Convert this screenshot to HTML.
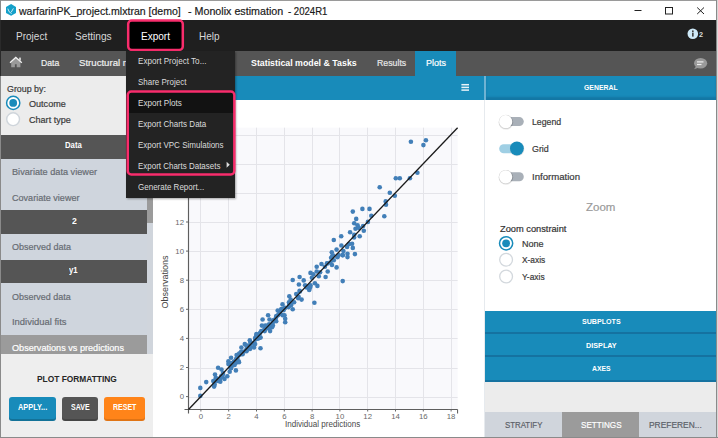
<!DOCTYPE html>
<html><head><meta charset="utf-8"><style>
*{margin:0;padding:0;box-sizing:border-box}
html,body{width:718px;height:438px;overflow:hidden;background:#fff;font-family:'Liberation Sans',sans-serif}
.a{position:absolute}
.t{position:absolute;white-space:pre;transform-origin:0 0;-webkit-text-stroke:0.2px currentColor}
.t.b{-webkit-text-stroke:0}
svg{position:absolute;left:0;top:0}
</style></head>
<body>
<div class="a" style="left:0px;top:0px;width:718px;height:1px;background:#9a9a9a;"></div>
<div class="a" style="left:0px;top:20px;width:716px;height:31px;background:#1f1f1f;"></div>
<div class="a" style="left:0px;top:51px;width:716px;height:25px;background:#555555;"></div>
<div class="a" style="left:415px;top:51px;width:41px;height:25px;background:#188bba;"></div>
<div class="a" style="left:0px;top:76px;width:153px;height:59px;background:#ececec;"></div>
<div class="a" style="left:0px;top:135px;width:147px;height:24px;background:#555555;"></div>
<div class="a" style="left:0px;top:159px;width:153px;height:51px;background:#cfd5dd;"></div>
<div class="a" style="left:0px;top:210px;width:147px;height:24px;background:#555555;"></div>
<div class="a" style="left:0px;top:234px;width:153px;height:26px;background:#cfd5dd;"></div>
<div class="a" style="left:0px;top:260px;width:147px;height:23px;background:#555555;"></div>
<div class="a" style="left:0px;top:283px;width:153px;height:72px;background:#cfd5dd;"></div>
<div class="a" style="left:0px;top:335px;width:147px;height:19px;background:#9b9b9b;"></div>
<div class="a" style="left:147px;top:76px;width:6px;height:278px;background:#d0d5dc;"></div>
<div class="a" style="left:147px;top:76px;width:6px;height:147px;background:#9b9b9b;"></div>
<div class="a" style="left:0px;top:354px;width:153px;height:83px;background:#eeeeee;"></div>
<div class="a" style="left:8.8px;top:397.4px;width:47.2px;height:23.4px;background:#188bba;border-radius:3px;box-shadow:inset 0 -2px 0 rgba(0,0,0,0.18);"></div>
<div class="a" style="left:61.8px;top:397.4px;width:36.4px;height:23.4px;background:#555555;border-radius:3px;box-shadow:inset 0 -2px 0 rgba(0,0,0,0.18);"></div>
<div class="a" style="left:104px;top:397.4px;width:41.2px;height:23.4px;background:#ff8419;border-radius:3px;box-shadow:inset 0 -2px 0 rgba(0,0,0,0.12);"></div>
<div class="a" style="left:153px;top:76px;width:332px;height:24px;background:#188bba;"></div>
<div class="a" style="left:486px;top:76px;width:230px;height:24px;background:#188bba;box-shadow:inset 0 -3px 2px rgba(0,50,90,0.22);"></div>
<div class="a" style="left:484px;top:76px;width:2px;height:24px;background:#6fb3d3;"></div>
<div class="a" style="left:484px;top:100px;width:1px;height:337px;background:#e6eaee;"></div>
<div class="a" style="left:485px;top:311px;width:231px;height:71px;background:#188bba;"></div>
<div class="a" style="left:485px;top:332px;width:231px;height:2px;background:#1572a0;"></div>
<div class="a" style="left:485px;top:355px;width:231px;height:2px;background:#1572a0;"></div>
<div class="a" style="left:485px;top:380px;width:231px;height:2px;background:#1572a0;"></div>
<div class="a" style="left:485px;top:382px;width:231px;height:30px;background:#ececec;"></div>
<div class="a" style="left:485px;top:412px;width:77px;height:25px;background:#d0d5dc;"></div>
<div class="a" style="left:562px;top:412px;width:77px;height:25px;background:#9b9b9b;"></div>
<div class="a" style="left:639px;top:412px;width:77px;height:25px;background:#d0d5dc;"></div>
<svg width="718" height="438" font-family="'Liberation Sans', sans-serif"><rect x="188.5" y="127.7" width="269.1" height="281.8" fill="#f9f9fc"/><line x1="200.50" y1="127.7" x2="200.50" y2="409.5" stroke="#e4e4e9" stroke-width="1"/><line x1="188.5" y1="397.50" x2="457.6" y2="397.50" stroke="#e4e4e9" stroke-width="1"/><line x1="228.50" y1="127.7" x2="228.50" y2="409.5" stroke="#e4e4e9" stroke-width="1"/><line x1="188.5" y1="368.50" x2="457.6" y2="368.50" stroke="#e4e4e9" stroke-width="1"/><line x1="256.50" y1="127.7" x2="256.50" y2="409.5" stroke="#e4e4e9" stroke-width="1"/><line x1="188.5" y1="338.50" x2="457.6" y2="338.50" stroke="#e4e4e9" stroke-width="1"/><line x1="284.50" y1="127.7" x2="284.50" y2="409.5" stroke="#e4e4e9" stroke-width="1"/><line x1="188.5" y1="309.50" x2="457.6" y2="309.50" stroke="#e4e4e9" stroke-width="1"/><line x1="312.50" y1="127.7" x2="312.50" y2="409.5" stroke="#e4e4e9" stroke-width="1"/><line x1="188.5" y1="280.50" x2="457.6" y2="280.50" stroke="#e4e4e9" stroke-width="1"/><line x1="339.50" y1="127.7" x2="339.50" y2="409.5" stroke="#e4e4e9" stroke-width="1"/><line x1="188.5" y1="251.50" x2="457.6" y2="251.50" stroke="#e4e4e9" stroke-width="1"/><line x1="367.50" y1="127.7" x2="367.50" y2="409.5" stroke="#e4e4e9" stroke-width="1"/><line x1="188.5" y1="222.50" x2="457.6" y2="222.50" stroke="#e4e4e9" stroke-width="1"/><line x1="395.50" y1="127.7" x2="395.50" y2="409.5" stroke="#e4e4e9" stroke-width="1"/><line x1="188.5" y1="193.50" x2="457.6" y2="193.50" stroke="#e4e4e9" stroke-width="1"/><line x1="423.50" y1="127.7" x2="423.50" y2="409.5" stroke="#e4e4e9" stroke-width="1"/><line x1="188.5" y1="164.50" x2="457.6" y2="164.50" stroke="#e4e4e9" stroke-width="1"/><line x1="451.50" y1="127.7" x2="451.50" y2="409.5" stroke="#e4e4e9" stroke-width="1"/><line x1="188.5" y1="135.50" x2="457.6" y2="135.50" stroke="#e4e4e9" stroke-width="1"/><line x1="188.5" y1="127.7" x2="188.5" y2="413.5" stroke="#5e5e5e" stroke-width="1.15"/><line x1="184.5" y1="409.5" x2="457.6" y2="409.5" stroke="#5e5e5e" stroke-width="1.15"/><line x1="457.6" y1="409.5" x2="457.6" y2="413.5" stroke="#555" stroke-width="1"/><line x1="200.90" y1="409.5" x2="200.90" y2="411.5" stroke="#666" stroke-width="1"/><text x="200.90" y="418.6" text-anchor="middle" font-size="7.8" fill="#6a6a6a">0</text><line x1="186.0" y1="396.60" x2="188.5" y2="396.60" stroke="#666" stroke-width="1"/><text x="184" y="399.30" text-anchor="end" font-size="7.8" fill="#6a6a6a">0</text><line x1="228.70" y1="409.5" x2="228.70" y2="411.5" stroke="#666" stroke-width="1"/><text x="228.70" y="418.6" text-anchor="middle" font-size="7.8" fill="#6a6a6a">2</text><line x1="186.0" y1="367.50" x2="188.5" y2="367.50" stroke="#666" stroke-width="1"/><text x="184" y="370.20" text-anchor="end" font-size="7.8" fill="#6a6a6a">2</text><line x1="256.50" y1="409.5" x2="256.50" y2="411.5" stroke="#666" stroke-width="1"/><text x="256.50" y="418.6" text-anchor="middle" font-size="7.8" fill="#6a6a6a">4</text><line x1="186.0" y1="338.40" x2="188.5" y2="338.40" stroke="#666" stroke-width="1"/><text x="184" y="341.10" text-anchor="end" font-size="7.8" fill="#6a6a6a">4</text><line x1="284.30" y1="409.5" x2="284.30" y2="411.5" stroke="#666" stroke-width="1"/><text x="284.30" y="418.6" text-anchor="middle" font-size="7.8" fill="#6a6a6a">6</text><line x1="186.0" y1="309.30" x2="188.5" y2="309.30" stroke="#666" stroke-width="1"/><text x="184" y="312.00" text-anchor="end" font-size="7.8" fill="#6a6a6a">6</text><line x1="312.10" y1="409.5" x2="312.10" y2="411.5" stroke="#666" stroke-width="1"/><text x="312.10" y="418.6" text-anchor="middle" font-size="7.8" fill="#6a6a6a">8</text><line x1="186.0" y1="280.20" x2="188.5" y2="280.20" stroke="#666" stroke-width="1"/><text x="184" y="282.90" text-anchor="end" font-size="7.8" fill="#6a6a6a">8</text><line x1="339.90" y1="409.5" x2="339.90" y2="411.5" stroke="#666" stroke-width="1"/><text x="339.90" y="418.6" text-anchor="middle" font-size="7.8" fill="#6a6a6a">10</text><line x1="186.0" y1="251.10" x2="188.5" y2="251.10" stroke="#666" stroke-width="1"/><text x="184" y="253.80" text-anchor="end" font-size="7.8" fill="#6a6a6a">10</text><line x1="367.70" y1="409.5" x2="367.70" y2="411.5" stroke="#666" stroke-width="1"/><text x="367.70" y="418.6" text-anchor="middle" font-size="7.8" fill="#6a6a6a">12</text><line x1="186.0" y1="222.00" x2="188.5" y2="222.00" stroke="#666" stroke-width="1"/><text x="184" y="224.70" text-anchor="end" font-size="7.8" fill="#6a6a6a">12</text><line x1="395.50" y1="409.5" x2="395.50" y2="411.5" stroke="#666" stroke-width="1"/><text x="395.50" y="418.6" text-anchor="middle" font-size="7.8" fill="#6a6a6a">14</text><line x1="186.0" y1="192.90" x2="188.5" y2="192.90" stroke="#666" stroke-width="1"/><text x="184" y="195.60" text-anchor="end" font-size="7.8" fill="#6a6a6a">14</text><line x1="423.30" y1="409.5" x2="423.30" y2="411.5" stroke="#666" stroke-width="1"/><text x="423.30" y="418.6" text-anchor="middle" font-size="7.8" fill="#6a6a6a">16</text><line x1="186.0" y1="163.80" x2="188.5" y2="163.80" stroke="#666" stroke-width="1"/><text x="184" y="166.50" text-anchor="end" font-size="7.8" fill="#6a6a6a">16</text><line x1="451.10" y1="409.5" x2="451.10" y2="411.5" stroke="#666" stroke-width="1"/><text x="451.10" y="418.6" text-anchor="middle" font-size="7.8" fill="#6a6a6a">18</text><line x1="186.0" y1="134.70" x2="188.5" y2="134.70" stroke="#666" stroke-width="1"/><text x="184" y="137.40" text-anchor="end" font-size="7.8" fill="#6a6a6a">18</text><text transform="translate(167.6,282.1) rotate(-90)" text-anchor="middle" font-size="8.5" fill="#444" textLength="53" lengthAdjust="spacingAndGlyphs">Observations</text><g fill="#427fb8"><circle cx="220.3" cy="381.8" r="2.3"/><circle cx="220.5" cy="378.2" r="2.3"/><circle cx="221.2" cy="376.8" r="2.3"/><circle cx="221.2" cy="376.2" r="2.3"/><circle cx="223.0" cy="373.1" r="2.3"/><circle cx="218.0" cy="379.8" r="2.3"/><circle cx="214.8" cy="380.6" r="2.3"/><circle cx="214.1" cy="386.6" r="2.3"/><circle cx="228.4" cy="364.1" r="2.3"/><circle cx="222.8" cy="374.5" r="2.3"/><circle cx="215.8" cy="377.8" r="2.3"/><circle cx="214.3" cy="382.2" r="2.3"/><circle cx="234.0" cy="361.9" r="2.3"/><circle cx="241.6" cy="353.4" r="2.3"/><circle cx="240.9" cy="353.1" r="2.3"/><circle cx="246.5" cy="351.2" r="2.3"/><circle cx="242.6" cy="354.3" r="2.3"/><circle cx="236.4" cy="361.6" r="2.3"/><circle cx="256.4" cy="334.0" r="2.3"/><circle cx="248.4" cy="347.0" r="2.3"/><circle cx="237.5" cy="358.1" r="2.3"/><circle cx="230.7" cy="363.5" r="2.3"/><circle cx="250.0" cy="348.9" r="2.3"/><circle cx="239.4" cy="353.6" r="2.3"/><circle cx="255.3" cy="339.6" r="2.3"/><circle cx="234.5" cy="361.5" r="2.3"/><circle cx="254.0" cy="347.4" r="2.3"/><circle cx="239.7" cy="354.7" r="2.3"/><circle cx="230.7" cy="368.2" r="2.3"/><circle cx="236.2" cy="362.6" r="2.3"/><circle cx="231.1" cy="367.9" r="2.3"/><circle cx="249.8" cy="340.2" r="2.3"/><circle cx="232.0" cy="364.0" r="2.3"/><circle cx="230.4" cy="364.7" r="2.3"/><circle cx="250.9" cy="343.0" r="2.3"/><circle cx="241.1" cy="351.8" r="2.3"/><circle cx="234.0" cy="362.1" r="2.3"/><circle cx="246.6" cy="350.0" r="2.3"/><circle cx="231.9" cy="365.5" r="2.3"/><circle cx="236.2" cy="358.9" r="2.3"/><circle cx="255.7" cy="338.6" r="2.3"/><circle cx="253.3" cy="343.6" r="2.3"/><circle cx="234.6" cy="365.0" r="2.3"/><circle cx="246.5" cy="346.0" r="2.3"/><circle cx="231.5" cy="363.0" r="2.3"/><circle cx="235.9" cy="360.1" r="2.3"/><circle cx="250.2" cy="345.9" r="2.3"/><circle cx="230.7" cy="363.6" r="2.3"/><circle cx="231.2" cy="366.4" r="2.3"/><circle cx="245.4" cy="350.9" r="2.3"/><circle cx="239.0" cy="362.3" r="2.3"/><circle cx="242.1" cy="351.7" r="2.3"/><circle cx="264.5" cy="328.8" r="2.3"/><circle cx="258.6" cy="337.5" r="2.3"/><circle cx="269.1" cy="324.3" r="2.3"/><circle cx="259.1" cy="337.6" r="2.3"/><circle cx="266.8" cy="325.8" r="2.3"/><circle cx="269.7" cy="325.3" r="2.3"/><circle cx="268.8" cy="328.0" r="2.3"/><circle cx="257.9" cy="338.7" r="2.3"/><circle cx="257.0" cy="335.7" r="2.3"/><circle cx="266.3" cy="328.6" r="2.3"/><circle cx="260.1" cy="332.9" r="2.3"/><circle cx="260.6" cy="337.6" r="2.3"/><circle cx="274.1" cy="320.2" r="2.3"/><circle cx="275.2" cy="320.1" r="2.3"/><circle cx="282.1" cy="309.0" r="2.3"/><circle cx="276.2" cy="321.3" r="2.3"/><circle cx="289.5" cy="303.7" r="2.3"/><circle cx="276.0" cy="317.4" r="2.3"/><circle cx="279.7" cy="312.3" r="2.3"/><circle cx="278.1" cy="315.1" r="2.3"/><circle cx="282.3" cy="309.3" r="2.3"/><circle cx="289.0" cy="302.2" r="2.3"/><circle cx="290.8" cy="305.2" r="2.3"/><circle cx="282.6" cy="315.2" r="2.3"/><circle cx="273.3" cy="320.2" r="2.3"/><circle cx="289.4" cy="303.9" r="2.3"/><circle cx="285.0" cy="307.9" r="2.3"/><circle cx="283.7" cy="310.1" r="2.3"/><circle cx="280.5" cy="313.7" r="2.3"/><circle cx="291.2" cy="304.8" r="2.3"/><circle cx="272.0" cy="327.2" r="2.3"/><circle cx="289.2" cy="305.7" r="2.3"/><circle cx="306.6" cy="287.4" r="2.3"/><circle cx="310.3" cy="287.0" r="2.3"/><circle cx="298.6" cy="296.8" r="2.3"/><circle cx="309.4" cy="288.8" r="2.3"/><circle cx="299.9" cy="291.5" r="2.3"/><circle cx="332.0" cy="265.0" r="2.3"/><circle cx="333.8" cy="260.3" r="2.3"/><circle cx="333.3" cy="255.5" r="2.3"/><circle cx="314.9" cy="283.2" r="2.3"/><circle cx="342.7" cy="255.3" r="2.3"/><circle cx="337.4" cy="257.3" r="2.3"/><circle cx="332.3" cy="256.0" r="2.3"/><circle cx="327.4" cy="263.5" r="2.3"/><circle cx="354.1" cy="237.5" r="2.3"/><circle cx="347.1" cy="246.9" r="2.3"/><circle cx="349.1" cy="244.0" r="2.3"/><circle cx="200.3" cy="395.9" r="2.3"/><circle cx="200.3" cy="387.9" r="2.3"/><circle cx="206.2" cy="382.1" r="2.3"/><circle cx="213.3" cy="381.1" r="2.3"/><circle cx="214.7" cy="384.5" r="2.3"/><circle cx="218.0" cy="381.0" r="2.3"/><circle cx="215.0" cy="374.5" r="2.3"/><circle cx="218.1" cy="367.7" r="2.3"/><circle cx="221.5" cy="369.5" r="2.3"/><circle cx="222.2" cy="376.3" r="2.3"/><circle cx="224.5" cy="379.0" r="2.3"/><circle cx="227.3" cy="376.3" r="2.3"/><circle cx="229.7" cy="371.8" r="2.3"/><circle cx="231.1" cy="367.4" r="2.3"/><circle cx="235.9" cy="370.4" r="2.3"/><circle cx="228.4" cy="361.2" r="2.3"/><circle cx="231.1" cy="357.8" r="2.3"/><circle cx="235.2" cy="363.3" r="2.3"/><circle cx="238.6" cy="361.2" r="2.3"/><circle cx="239.3" cy="353.7" r="2.3"/><circle cx="241.4" cy="347.5" r="2.3"/><circle cx="242.7" cy="352.3" r="2.3"/><circle cx="244.8" cy="344.1" r="2.3"/><circle cx="246.2" cy="350.3" r="2.3"/><circle cx="247.5" cy="345.5" r="2.3"/><circle cx="236.6" cy="355.1" r="2.3"/><circle cx="250.3" cy="342.1" r="2.3"/><circle cx="255.1" cy="344.1" r="2.3"/><circle cx="260.5" cy="348.2" r="2.3"/><circle cx="256.4" cy="335.2" r="2.3"/><circle cx="255.1" cy="338.0" r="2.3"/><circle cx="259.9" cy="337.3" r="2.3"/><circle cx="261.2" cy="331.1" r="2.3"/><circle cx="264.7" cy="331.1" r="2.3"/><circle cx="270.1" cy="331.1" r="2.3"/><circle cx="261.9" cy="325.6" r="2.3"/><circle cx="265.3" cy="325.6" r="2.3"/><circle cx="262.6" cy="319.5" r="2.3"/><circle cx="268.1" cy="315.3" r="2.3"/><circle cx="269.5" cy="319.5" r="2.3"/><circle cx="272.9" cy="325.6" r="2.3"/><circle cx="272.9" cy="322.2" r="2.3"/><circle cx="276.3" cy="316.0" r="2.3"/><circle cx="277.7" cy="310.5" r="2.3"/><circle cx="281.1" cy="309.2" r="2.3"/><circle cx="282.5" cy="304.4" r="2.3"/><circle cx="284.5" cy="315.3" r="2.3"/><circle cx="285.2" cy="318.8" r="2.3"/><circle cx="285.2" cy="322.2" r="2.3"/><circle cx="288.6" cy="307.1" r="2.3"/><circle cx="292.7" cy="309.2" r="2.3"/><circle cx="290.7" cy="299.6" r="2.3"/><circle cx="289.3" cy="296.2" r="2.3"/><circle cx="294.1" cy="302.3" r="2.3"/><circle cx="296.2" cy="294.1" r="2.3"/><circle cx="298.2" cy="298.2" r="2.3"/><circle cx="292.7" cy="280.0" r="2.3"/><circle cx="299.6" cy="277.0" r="2.3"/><circle cx="298.9" cy="284.5" r="2.3"/><circle cx="303.7" cy="280.4" r="2.3"/><circle cx="305.1" cy="285.2" r="2.3"/><circle cx="307.8" cy="286.6" r="2.3"/><circle cx="310.5" cy="285.2" r="2.3"/><circle cx="309.2" cy="290.0" r="2.3"/><circle cx="299.6" cy="290.7" r="2.3"/><circle cx="301.6" cy="299.6" r="2.3"/><circle cx="317.4" cy="285.9" r="2.3"/><circle cx="310.5" cy="272.9" r="2.3"/><circle cx="313.3" cy="274.2" r="2.3"/><circle cx="311.9" cy="277.7" r="2.3"/><circle cx="316.7" cy="271.5" r="2.3"/><circle cx="318.8" cy="276.3" r="2.3"/><circle cx="320.1" cy="272.2" r="2.3"/><circle cx="316.7" cy="266.7" r="2.3"/><circle cx="321.5" cy="264.0" r="2.3"/><circle cx="324.9" cy="266.7" r="2.3"/><circle cx="327.7" cy="271.5" r="2.3"/><circle cx="325.6" cy="277.0" r="2.3"/><circle cx="327.0" cy="263.3" r="2.3"/><circle cx="330.4" cy="262.6" r="2.3"/><circle cx="331.1" cy="257.8" r="2.3"/><circle cx="331.8" cy="252.3" r="2.3"/><circle cx="336.6" cy="249.6" r="2.3"/><circle cx="336.6" cy="267.4" r="2.3"/><circle cx="338.6" cy="255.1" r="2.3"/><circle cx="342.7" cy="255.1" r="2.3"/><circle cx="343.4" cy="251.0" r="2.3"/><circle cx="341.4" cy="245.5" r="2.3"/><circle cx="347.5" cy="253.7" r="2.3"/><circle cx="347.5" cy="257.1" r="2.3"/><circle cx="333.8" cy="240.0" r="2.3"/><circle cx="342.7" cy="281.1" r="2.3"/><circle cx="352.8" cy="211.6" r="2.3"/><circle cx="362.4" cy="208.9" r="2.3"/><circle cx="369.5" cy="208.9" r="2.3"/><circle cx="371.3" cy="215.8" r="2.3"/><circle cx="356.2" cy="218.9" r="2.3"/><circle cx="354.2" cy="223.3" r="2.3"/><circle cx="357.6" cy="225.3" r="2.3"/><circle cx="355.5" cy="228.8" r="2.3"/><circle cx="359.0" cy="228.1" r="2.3"/><circle cx="363.1" cy="226.0" r="2.3"/><circle cx="363.8" cy="230.8" r="2.3"/><circle cx="367.9" cy="221.9" r="2.3"/><circle cx="350.1" cy="232.2" r="2.3"/><circle cx="354.2" cy="234.9" r="2.3"/><circle cx="359.7" cy="236.3" r="2.3"/><circle cx="341.2" cy="236.3" r="2.3"/><circle cx="352.1" cy="243.8" r="2.3"/><circle cx="352.8" cy="247.9" r="2.3"/><circle cx="354.9" cy="254.1" r="2.3"/><circle cx="384.3" cy="216.2" r="2.3"/><circle cx="385.7" cy="201.4" r="2.3"/><circle cx="386.0" cy="204.8" r="2.3"/><circle cx="410.9" cy="141.8" r="2.3"/><circle cx="423.4" cy="145.1" r="2.3"/><circle cx="425.9" cy="140.3" r="2.3"/><circle cx="395.8" cy="178.2" r="2.3"/><circle cx="399.8" cy="178.2" r="2.3"/><circle cx="409.9" cy="178.2" r="2.3"/><circle cx="417.4" cy="172.7" r="2.3"/><circle cx="379.7" cy="187.3" r="2.3"/><circle cx="389.8" cy="192.8" r="2.3"/><circle cx="394.8" cy="195.8" r="2.3"/><circle cx="314.4" cy="302.7" r="2.3"/></g>
<line x1="188.5" y1="409.5" x2="457.6" y2="127.7" stroke="#1a1a1a" stroke-width="1.3"/>
<polygon points="11.1,4.1 16,7 16,13 11.1,15.8 6,13 6,7" fill="#14a0c9"/><path d="M7.8,8.6 Q8.6,12.4 11.6,13.6 M11.2,12.2 L13.4,8.4" stroke="#ffffff" stroke-width="0.9" fill="none" opacity="0.85"/><line x1="634.5" y1="10.5" x2="641.5" y2="10.5" stroke="#222" stroke-width="1"/><rect x="665.5" y="7.5" width="7" height="6.5" fill="none" stroke="#222" stroke-width="1"/><path d="M697.2,7.5 L704,14 M704,7.5 L697.2,14" stroke="#222" stroke-width="1"/><rect x="128.2" y="20.5" width="54.6" height="29.5" rx="3.5" fill="#000" stroke="#f82d6c" stroke-width="2.5"/><circle cx="692.8" cy="33.8" r="5.3" fill="#cde8f7"/><rect x="692.1" y="32.6" width="1.5" height="4" fill="#333"/><circle cx="692.85" cy="31.2" r="0.85" fill="#333"/><path d="M11.2,62.2 L15.8,58.3 L20.4,62.2 L20.4,67.3 L16.7,67.3 L16.7,64.2 L14.9,64.2 L14.9,67.3 L11.2,67.3 Z" fill="#9a9a9a"/><path d="M10,62.8 L15.8,57.4 L21.8,62.8" stroke="#f2f2f2" stroke-width="1.3" fill="none"/><rect x="19.2" y="57.6" width="1.6" height="3" fill="#e8e8e8"/><ellipse cx="700.6" cy="63.2" rx="6.6" ry="5.2" fill="#9a9a9a"/><path d="M696,66.5 L694,69.2 L699,67.5 Z" fill="#9a9a9a"/><rect x="697" y="61.3" width="6.5" height="1.2" fill="#eee"/><rect x="697" y="63.9" width="4.5" height="1.2" fill="#eee"/><rect x="461.4" y="83.95" width="7.6" height="1.5" fill="#e8f3f8"/><rect x="461.4" y="86.65" width="7.6" height="1.5" fill="#e8f3f8"/><rect x="461.4" y="89.35" width="7.6" height="1.5" fill="#e8f3f8"/><circle cx="13.2" cy="102.9" r="6.6" fill="#fff" stroke="#188bba" stroke-width="1.5"/><circle cx="13.2" cy="102.9" r="3.9" fill="#188bba"/><circle cx="13.1" cy="119.2" r="6.4" fill="#fff" stroke="#cfd5db" stroke-width="1.4"/><rect x="502" y="117.10000000000001" width="21.8" height="9" rx="4.5" fill="#a9b0b8"/><circle cx="505.9" cy="122.2" r="7.4" fill="#000" opacity="0.10"/><circle cx="505.8" cy="121.9" r="7.0" fill="#000" opacity="0.12"/><circle cx="505.7" cy="121.7" r="6.6" fill="#ffffff"/><rect x="499.2" y="144.3" width="20" height="9" rx="4.5" fill="#9fcfe4"/><circle cx="517.1" cy="149.0" r="7.3" fill="#000" opacity="0.10"/><circle cx="516.9" cy="148.5" r="6.9" fill="#188bba"/><rect x="502" y="172.20000000000002" width="21.8" height="9" rx="4.5" fill="#a9b0b8"/><circle cx="505.9" cy="177.3" r="7.4" fill="#000" opacity="0.10"/><circle cx="505.8" cy="177.0" r="7.0" fill="#000" opacity="0.12"/><circle cx="505.7" cy="176.8" r="6.6" fill="#ffffff"/><circle cx="506.1" cy="243.3" r="6.6" fill="#fff" stroke="#188bba" stroke-width="1.5"/><circle cx="506.1" cy="243.3" r="3.9" fill="#188bba"/><circle cx="506.1" cy="259.7" r="6.4" fill="#fff" stroke="#d3d8dd" stroke-width="1.3"/><circle cx="506.1" cy="276.5" r="6.4" fill="#fff" stroke="#d3d8dd" stroke-width="1.3"/></svg>
<div class="t" style="left:19.00px;top:6.00px;font-size:11.5px;line-height:11.5px;color:#1a1a1a;font-weight:normal;transform:scaleX(0.9172);">warfarinPK_project.mlxtran [demo]</div>
<div class="t" style="left:188.40px;top:6.00px;font-size:11.5px;line-height:11.5px;color:#1a1a1a;font-weight:normal;transform:scaleX(0.9309);">- Monolix estimation</div>
<div class="t" style="left:288.00px;top:6.00px;font-size:11.5px;line-height:11.5px;color:#1a1a1a;font-weight:normal;transform:scaleX(0.8328);">- 2024R1</div>
<div class="t b" style="left:15.60px;top:31.00px;font-size:10.5px;line-height:10.5px;color:#d8d8d8;font-weight:normal;transform:scaleX(0.9545);">Project</div>
<div class="t b" style="left:75.40px;top:31.00px;font-size:10.5px;line-height:10.5px;color:#d8d8d8;font-weight:normal;transform:scaleX(0.9670);">Settings</div>
<div class="t b" style="left:141.00px;top:31.00px;font-size:10.5px;line-height:10.5px;color:#ffffff;font-weight:normal;transform:scaleX(0.9552);">Export</div>
<div class="t b" style="left:198.50px;top:31.00px;font-size:10.5px;line-height:10.5px;color:#d8d8d8;font-weight:normal;transform:scaleX(0.9487);">Help</div>
<div class="t b" style="left:699.10px;top:31.00px;font-size:8px;line-height:8px;color:#dddddd;font-weight:bold;transform:scaleX(0.8982);">2</div>
<div class="t" style="left:40.70px;top:58.00px;font-size:9.5px;line-height:9.5px;color:#f0f0f0;font-weight:normal;transform:scaleX(0.9114);">Data</div>
<div class="t" style="left:79.00px;top:58.00px;font-size:9.5px;line-height:9.5px;color:#f0f0f0;font-weight:normal;transform:scaleX(1.0120);">Structural model</div>
<div class="t b" style="left:251.10px;top:58.00px;font-size:9.5px;line-height:9.5px;color:#ffffff;font-weight:bold;transform:scaleX(0.9282);">Statistical model &amp; Tasks</div>
<div class="t" style="left:376.90px;top:58.00px;font-size:9.5px;line-height:9.5px;color:#e8e8e8;font-weight:normal;transform:scaleX(0.9215);">Results</div>
<div class="t" style="left:425.80px;top:58.00px;font-size:9.5px;line-height:9.5px;color:#ffffff;font-weight:normal;transform:scaleX(0.9467);">Plots</div>
<div class="t" style="left:6.50px;top:85.00px;font-size:9.3px;line-height:9.3px;color:#3a3a3a;font-weight:normal;transform:scaleX(0.9528);">Group by:</div>
<div class="t" style="left:28.60px;top:100.00px;font-size:9.3px;line-height:9.3px;color:#3a3a3a;font-weight:normal;transform:scaleX(0.9756);">Outcome</div>
<div class="t" style="left:28.60px;top:116.00px;font-size:9.3px;line-height:9.3px;color:#3a3a3a;font-weight:normal;transform:scaleX(0.9746);">Chart type</div>
<div class="t b" style="left:65.40px;top:141.00px;font-size:8.3px;line-height:8.3px;color:#ffffff;font-weight:bold;transform:scaleX(0.9341);">Data</div>
<div class="t" style="left:11.60px;top:168.00px;font-size:9.3px;line-height:9.3px;color:#676c73;font-weight:normal;transform:scaleX(0.9861);">Bivariate data viewer</div>
<div class="t" style="left:11.60px;top:194.00px;font-size:9.3px;line-height:9.3px;color:#676c73;font-weight:normal;transform:scaleX(0.9747);">Covariate viewer</div>
<div class="t b" style="left:71.60px;top:217.00px;font-size:8.8px;line-height:8.8px;color:#ffffff;font-weight:bold;transform:scaleX(0.9783);">2</div>
<div class="t" style="left:11.60px;top:243.00px;font-size:9.3px;line-height:9.3px;color:#676c73;font-weight:normal;transform:scaleX(0.9658);">Observed data</div>
<div class="t b" style="left:69.30px;top:266.00px;font-size:8.6px;line-height:8.6px;color:#ffffff;font-weight:bold;transform:scaleX(0.8993);">y1</div>
<div class="t" style="left:11.90px;top:293.00px;font-size:9.3px;line-height:9.3px;color:#676c73;font-weight:normal;transform:scaleX(0.9625);">Observed data</div>
<div class="t" style="left:11.90px;top:318.00px;font-size:9.3px;line-height:9.3px;color:#676c73;font-weight:normal;transform:scaleX(1.0140);">Individual fits</div>
<div class="t" style="left:11.90px;top:344.00px;font-size:9.3px;line-height:9.3px;color:#ffffff;font-weight:normal;transform:scaleX(0.9807);">Observations vs predictions</div>
<div class="t b" style="left:37.20px;top:374.00px;font-size:9.9px;line-height:9.9px;color:#262626;font-weight:bold;transform:scaleX(0.8474);">PLOT FORMATTING</div>
<div class="t b" style="left:17.80px;top:403.00px;font-size:8.9px;line-height:8.9px;color:#ffffff;font-weight:bold;transform:scaleX(0.8298);">APPLY...</div>
<div class="t b" style="left:70.60px;top:403.00px;font-size:8.9px;line-height:8.9px;color:#ffffff;font-weight:bold;transform:scaleX(0.7910);">SAVE</div>
<div class="t b" style="left:112.80px;top:403.00px;font-size:8.9px;line-height:8.9px;color:#ffffff;font-weight:bold;transform:scaleX(0.7907);">RESET</div>
<div class="t b" style="left:584.30px;top:84.00px;font-size:8px;line-height:8px;color:#ffffff;font-weight:bold;transform:scaleX(0.8588);">GENERAL</div>
<div class="t" style="left:532.40px;top:118.00px;font-size:9.3px;line-height:9.3px;color:#3a3a3a;font-weight:normal;transform:scaleX(0.9410);">Legend</div>
<div class="t" style="left:532.40px;top:145.00px;font-size:9.3px;line-height:9.3px;color:#3a3a3a;font-weight:normal;transform:scaleX(0.9557);">Grid</div>
<div class="t" style="left:532.40px;top:173.00px;font-size:9.3px;line-height:9.3px;color:#3a3a3a;font-weight:normal;transform:scaleX(1.0319);">Information</div>
<div class="t" style="left:586.40px;top:202.00px;font-size:11.2px;line-height:11.2px;color:#9a9a9a;font-weight:normal;transform:scaleX(1.0276);">Zoom</div>
<div class="t" style="left:499.50px;top:225.00px;font-size:9px;line-height:9px;color:#333333;font-weight:normal;transform:scaleX(1.0290);">Zoom constraint</div>
<div class="t" style="left:521.70px;top:240.00px;font-size:9px;line-height:9px;color:#3a3a3a;font-weight:normal;transform:scaleX(1.0039);">None</div>
<div class="t" style="left:521.70px;top:256.00px;font-size:9px;line-height:9px;color:#3a3a3a;font-weight:normal;transform:scaleX(0.9274);">X-axis</div>
<div class="t" style="left:521.70px;top:273.00px;font-size:9px;line-height:9px;color:#3a3a3a;font-weight:normal;transform:scaleX(0.9344);">Y-axis</div>
<div class="t b" style="left:581.90px;top:318.00px;font-size:7.6px;line-height:7.6px;color:#ffffff;font-weight:bold;transform:scaleX(0.9357);">SUBPLOTS</div>
<div class="t b" style="left:585.90px;top:342.00px;font-size:7.6px;line-height:7.6px;color:#ffffff;font-weight:bold;transform:scaleX(0.9529);">DISPLAY</div>
<div class="t b" style="left:591.90px;top:365.00px;font-size:7.6px;line-height:7.6px;color:#ffffff;font-weight:bold;transform:scaleX(0.8991);">AXES</div>
<div class="t" style="left:504.70px;top:420.00px;font-size:9.6px;line-height:9.6px;color:#5b6068;font-weight:normal;transform:scaleX(0.8189);">STRATIFY</div>
<div class="t" style="left:580.70px;top:420.00px;font-size:9.6px;line-height:9.6px;color:#ffffff;font-weight:normal;transform:scaleX(0.8461);">SETTINGS</div>
<div class="t" style="left:648.90px;top:420.00px;font-size:9.6px;line-height:9.6px;color:#5b6068;font-weight:normal;transform:scaleX(0.8763);">PREFEREN...</div>
<div class="t b" style="left:285.30px;top:420.00px;font-size:8.3px;line-height:8.3px;color:#4a4a4a;font-weight:normal;transform:scaleX(0.9718);">Individual predictions</div>
<div class="a" style="left:126px;top:50.5px;width:109px;height:147px;background:#232323;box-shadow:1px 1px 2px rgba(0,0,0,0.35);"></div>
<div class="a" style="left:127.5px;top:92px;width:107px;height:20.5px;background:#121212;"></div>
<svg width="718" height="438" style="z-index:3"><rect x="127.75" y="91.6" width="106.6" height="82.8" rx="3.5" fill="none" stroke="#f82d6c" stroke-width="2.5"/><path d="M226.6,161.7 L229.8,164.7 L226.6,167.7 Z" fill="#dcdcdc"/></svg>
<div class="t b" style="left:137.50px;top:57.00px;font-size:9px;line-height:9px;color:#dcdcdc;font-weight:normal;transform:scaleX(0.9015);">Export Project To...</div>
<div class="t b" style="left:137.50px;top:78.00px;font-size:9px;line-height:9px;color:#dcdcdc;font-weight:normal;transform:scaleX(0.8876);">Share Project</div>
<div class="t b" style="left:137.50px;top:99.00px;font-size:9px;line-height:9px;color:#dcdcdc;font-weight:normal;transform:scaleX(0.9046);">Export Plots</div>
<div class="t b" style="left:137.50px;top:120.00px;font-size:9px;line-height:9px;color:#dcdcdc;font-weight:normal;transform:scaleX(0.8924);">Export Charts Data</div>
<div class="t b" style="left:137.50px;top:141.00px;font-size:9px;line-height:9px;color:#dcdcdc;font-weight:normal;transform:scaleX(0.8912);">Export VPC Simulations</div>
<div class="t b" style="left:137.50px;top:162.00px;font-size:9px;line-height:9px;color:#dcdcdc;font-weight:normal;transform:scaleX(0.8856);">Export Charts Datasets</div>
<div class="t b" style="left:137.50px;top:183.00px;font-size:9px;line-height:9px;color:#dcdcdc;font-weight:normal;transform:scaleX(0.8894);">Generate Report...</div>
<div class="a" style="left:0px;top:0px;width:1px;height:20px;background:#8a8a8a;"></div>
<div class="a" style="left:0px;top:20px;width:1px;height:56px;background:#2a2a2a;"></div>
<div class="a" style="left:0px;top:76px;width:1px;height:362px;background:#8a8a8a;"></div>
<div class="a" style="left:716px;top:0px;width:1px;height:438px;background:#8a8a8a;"></div>
<div class="a" style="left:717px;top:0px;width:1px;height:438px;background:#d8d8d8;"></div>
<div class="a" style="left:0px;top:437px;width:718px;height:1px;background:#8a8a8a;"></div>
</body></html>
